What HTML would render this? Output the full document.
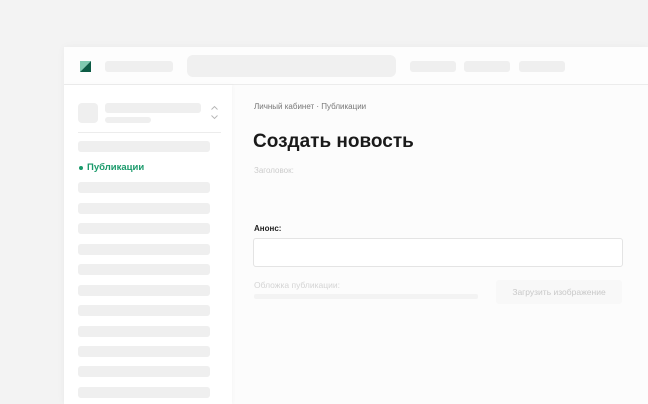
<!DOCTYPE html>
<html><head><meta charset="utf-8"><style>
*{margin:0;padding:0;box-sizing:border-box}
body{width:648px;height:404px;overflow:hidden;background:#f3f3f3;font-family:"Liberation Sans",sans-serif;position:relative}
.a{position:absolute}
.g{position:absolute;background:#efefef;border-radius:3px}
</style></head><body>
<div class="a" style="left:64px;top:47px;width:584px;height:357px;background:#fcfcfc;box-shadow:0 0 8px rgba(0,0,0,0.04)"></div>
<div class="a" style="left:64px;top:47px;width:584px;height:38px;background:#fdfdfd;border-bottom:1px solid #ececec"></div>
<svg class="a" style="left:80px;top:61px" width="11" height="11"><polygon points="0,0 11,0 0,11" fill="#7fc9b0"/><polygon points="11,0 11,11 0,11" fill="#0c5b45"/></svg>
<div class="g" style="left:105px;top:61px;width:68px;height:11px"></div>
<div class="g" style="left:187px;top:55px;width:209px;height:22px;border-radius:6px;background:#f0f0f0"></div>
<div class="g" style="left:410px;top:61px;width:46px;height:11px"></div>
<div class="g" style="left:464px;top:61px;width:46px;height:11px"></div>
<div class="g" style="left:519px;top:61px;width:46px;height:11px"></div>
<div class="a" style="left:64px;top:85px;width:168px;height:319px;background:#fff;box-shadow:1px 0 4px rgba(0,0,0,0.03)"></div>
<div class="g" style="left:78px;top:103px;width:20px;height:20px;border-radius:4px"></div>
<div class="g" style="left:105px;top:103px;width:96px;height:10px"></div>
<div class="g" style="left:105px;top:117px;width:46px;height:6px"></div>
<svg class="a" style="left:210px;top:105px" width="9" height="15"><path d="M1.5 4.5L4.5 1.5L7.5 4.5M1.5 10.5L4.5 13.5L7.5 10.5" fill="none" stroke="#b5b5b5" stroke-width="0.9"/></svg>
<div class="a" style="left:78px;top:132px;width:143px;height:1px;background:#ececec"></div>
<div class="g" style="left:78px;top:141px;width:132px;height:11px"></div>
<div class="a" style="left:79px;top:166px;width:4px;height:4px;border-radius:50%;background:#1a9a6b"></div>
<div class="a" style="left:87px;top:162px;font-size:9.5px;color:#1a9a6b;font-weight:bold">Публикации</div>
<div class="g" style="left:78px;top:182px;width:132px;height:11px"></div>
<div class="g" style="left:78px;top:203px;width:132px;height:11px"></div>
<div class="g" style="left:78px;top:223px;width:132px;height:11px"></div>
<div class="g" style="left:78px;top:244px;width:132px;height:11px"></div>
<div class="g" style="left:78px;top:264px;width:132px;height:11px"></div>
<div class="g" style="left:78px;top:285px;width:132px;height:11px"></div>
<div class="g" style="left:78px;top:305px;width:132px;height:11px"></div>
<div class="g" style="left:78px;top:326px;width:132px;height:11px"></div>
<div class="g" style="left:78px;top:346px;width:132px;height:11px"></div>
<div class="g" style="left:78px;top:366px;width:132px;height:11px"></div>
<div class="g" style="left:78px;top:387px;width:132px;height:11px"></div>
<div class="a" style="left:254px;top:102px;font-size:8px;color:#777">Личный кабинет · Публикации</div>
<div class="a" style="left:253px;top:131px;font-size:19px;font-weight:bold;color:#1a1a1a">Создать новость</div>
<div class="a" style="left:254px;top:166px;font-size:8px;color:#ccc">Заголовок:</div>
<div class="a" style="left:254px;top:224px;font-size:8px;font-weight:bold;color:#222">Анонс:</div>
<div class="a" style="left:253px;top:238px;width:370px;height:29px;background:#fff;border:1px solid #e4e4e4;border-radius:3px"></div>
<div class="a" style="left:254px;top:280px;font-size:8.5px;color:#d4d4d4">Обложка публикации:</div>
<div class="a" style="left:254px;top:294px;width:224px;height:5px;background:#f3f3f3;border-radius:2px"></div>
<div class="a" style="left:496px;top:280px;width:126px;height:24px;background:#f8f8f8;border-radius:3px;font-size:8.5px;color:#c8c8c8;text-align:center;line-height:24px">Загрузить изображение</div>
</body></html>
